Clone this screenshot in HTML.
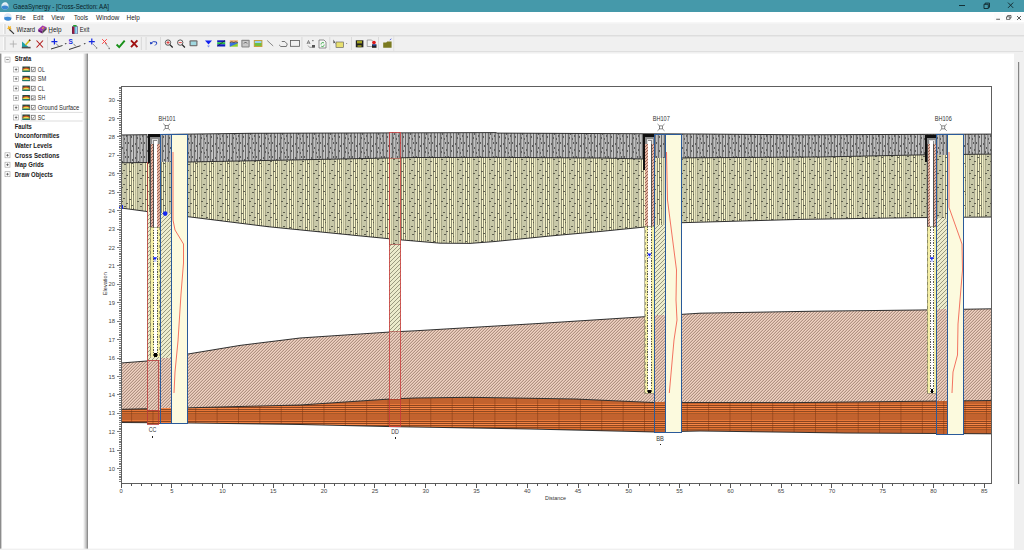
<!DOCTYPE html>
<html><head><meta charset="utf-8"><style>
*{margin:0;padding:0;box-sizing:border-box}
html,body{width:1024px;height:550px;overflow:hidden;background:#f0f0f0;font-family:"Liberation Sans", sans-serif;}
.abs{position:absolute}
#title{left:0;top:0;width:1024px;height:12px;background:#4799aa}
#menu{left:0;top:12px;width:1024px;height:10px;background:#fff}
#tb1{left:0;top:22px;width:1024px;height:13px;background:#f0f0f0}
#tb2{left:0;top:35px;width:1024px;height:16px;background:#f0f0f0}
#tbline{left:0;top:51px;width:1024px;height:1px;background:#a0a0a0}
#left{left:1px;top:52px;width:83px;height:496px;background:#fff;border-left:1px solid #a0a0a0}
#split{left:84px;top:52px;width:4px;height:498px;background:#f0f0f0}
#main{left:88px;top:52px;width:911px;height:496px;background:#fff}
.t{position:absolute;font-size:7px;color:#000;white-space:nowrap;line-height:8px}
</style></head><body>
<svg width="1024" height="550" style="position:absolute;left:0;top:0" shape-rendering="crispEdges">
<g shape-rendering="auto"><rect x="0" y="0" width="1024" height="12" fill="#4599aa"/>
<circle cx="5" cy="6" r="3.6" fill="#d8e8f4"/><path d="M1.6 6.5 Q5 4.5 8.4 6.8 L8 8.6 Q5 10.6 2 8.4Z" fill="#3a86d0"/><path d="M3 3.5 Q5 2.2 7 3.2" stroke="#fff" stroke-width="0.8" fill="none"/>
<text x="13" y="8.8" font-family='"Liberation Sans", sans-serif' font-size="7" textLength="96" lengthAdjust="spacingAndGlyphs" fill="#0a2026">GaeaSynergy - [Cross-Section: AA]</text>
<rect x="959" y="5" width="6" height="0.9" fill="#10262b"/>
<path d="M984 4.3h4.3v4.2h-4.3z M985.2 4.3V3.1h4.3v4.2h-1.2" stroke="#10262b" stroke-width="0.9" fill="none"/>
<path d="M1008 2.6L1013.2 7.9M1013.2 2.6L1008 7.9" stroke="#10262b" stroke-width="0.9"/>
<rect x="0" y="12" width="1024" height="10" fill="#ffffff"/>
<circle cx="7.8" cy="17" r="3.8" fill="#dbe8f5"/><path d="M4 17.5 Q8 15.8 11.6 17.8 L11 20 Q8 21.6 4.6 19.8Z" fill="#3b8ad6"/>
<text x="15.8" y="20" font-family='"Liberation Sans", sans-serif' font-size="7" textLength="9.8" lengthAdjust="spacingAndGlyphs" fill="#1a1a1a">File</text>
<text x="33" y="20" font-family='"Liberation Sans", sans-serif' font-size="7" textLength="10.5" lengthAdjust="spacingAndGlyphs" fill="#1a1a1a">Edit</text>
<text x="51.2" y="20" font-family='"Liberation Sans", sans-serif' font-size="7" textLength="13.2" lengthAdjust="spacingAndGlyphs" fill="#1a1a1a">View</text>
<text x="74" y="20" font-family='"Liberation Sans", sans-serif' font-size="7" textLength="14" lengthAdjust="spacingAndGlyphs" fill="#1a1a1a">Tools</text>
<text x="96" y="20" font-family='"Liberation Sans", sans-serif' font-size="7" textLength="23.3" lengthAdjust="spacingAndGlyphs" fill="#1a1a1a">Window</text>
<text x="126.6" y="20" font-family='"Liberation Sans", sans-serif' font-size="7" textLength="13.2" lengthAdjust="spacingAndGlyphs" fill="#1a1a1a">Help</text>
<rect x="994" y="13" width="9" height="8" fill="#fcfcfc"/><rect x="1004" y="13" width="9" height="8" fill="#fcfcfc"/><rect x="1014.5" y="13" width="9" height="8" fill="#fcfcfc"/>
<rect x="996.2" y="18.8" width="3.8" height="0.8" fill="#333"/>
<path d="M1006.5 16.8h3.4v2.6h-3.4z M1007.6 16.8v-1.3h3.4v2.6h-1.1" stroke="#333" stroke-width="0.7" fill="none"/>
<path d="M1017 16L1021 20M1021 16L1017 20" stroke="#333" stroke-width="0.8"/>
<rect x="0" y="22" width="1024" height="29" fill="#f0f0f0"/>
<rect x="0" y="35.2" width="1024" height="1.2" fill="#d9d9d9"/><rect x="0" y="22" width="1024" height="1.5" fill="#f7f7f7"/>
<rect x="0" y="51.8" width="1023" height="1.8" fill="#9c9c9c"/>
<rect x="3.2" y="24" width="0.8" height="10" fill="#fdfdfd"/><rect x="4.6" y="24" width="0.8" height="10" fill="#c8c8c8"/>
<rect x="3.2" y="37" width="0.8" height="13" fill="#fdfdfd"/><rect x="4.6" y="37" width="0.8" height="13" fill="#c8c8c8"/>
<path d="M8 25.5l1.5 1.2 1.6-.6-.4 1.7 1 1.4-1.7.1-.9 1.4-.6-1.6-1.6-.5 1.3-1z" fill="#f0b020"/><path d="M9.5 29.5l4.5 4.4" stroke="#333" stroke-width="1.1"/>
<text x="16.5" y="32.4" font-family='"Liberation Sans", sans-serif' font-size="7" textLength="18.5" lengthAdjust="spacingAndGlyphs" fill="#1a1a1a">Wizard</text>
<path d="M38.2 29.2L42.6 25.6 46.6 27.2 42.4 31z" fill="#a032b4"/><path d="M38.2 29.2L42.4 31 42.4 33.4 38.2 31.4z" fill="#6a1a7a"/><path d="M42.4 31L46.6 27.2 46.6 29.6 42.4 33.4z" fill="#4a4a4a"/><path d="M43.6 26.8l-1.2 1.6 1 .3" stroke="#f4d020" stroke-width="1" fill="none"/>
<text x="48.3" y="32.4" font-family='"Liberation Sans", sans-serif' font-size="7" textLength="13.2" lengthAdjust="spacingAndGlyphs" fill="#1a1a1a">Help</text><rect x="48.5" y="32.6" width="3.8" height="0.5" fill="#222"/>
<rect x="72" y="26.4" width="5.8" height="7.4" fill="#302060"/><rect x="72.4" y="26.8" width="2" height="6.8" fill="#a01838"/><rect x="74.6" y="26.8" width="2.8" height="6.8" fill="#c8f0ff"/><rect x="75.2" y="27" width="1.2" height="6.4" fill="#60b8e0"/><rect x="73.2" y="25" width="3.4" height="1.5" fill="#20a030"/>
<text x="79.8" y="32.4" font-family='"Liberation Sans", sans-serif' font-size="7" textLength="9.5" lengthAdjust="spacingAndGlyphs" fill="#1a1a1a">Exit</text>
<path d="M13.3 40.5v7M9.8 44h7" stroke="#a8a8a8" stroke-width="0.8"/>
<path d="M22 47.5l0-6 6.5 5.5z" fill="#20a0a8"/><rect x="21.8" y="46.8" width="8.8" height="1.6" fill="#505050"/><path d="M25.5 45l4.5-5" stroke="#d0c020" stroke-width="1.6"/><path d="M29.2 40.8l1-1" stroke="#502010" stroke-width="1.6"/>
<path d="M36.5 40.5l6.5 7M43 40.5l-6.5 7" stroke="#b01818" stroke-width="1.1"/>
<rect x="47.3" y="37" width="0.7" height="13" fill="#d0d0d0"/>
<path d="M54.4 38.6v6M51.4 41.6h6" stroke="#1428e0" stroke-width="1.2"/><path d="M51 49l11.5-3.5" stroke="#222" stroke-width="0.9"/><path d="M56 43.5l2.5 2.5" stroke="#333" stroke-width="0.6"/><path d="M64.6 43.2h2.2l-1.1 1.3z" fill="#222"/>
<text x="68.6" y="44.3" font-family='"Liberation Sans", sans-serif' font-size="6.5" font-weight="bold" fill="#1428e0">S</text><path d="M69 49.5l11.5-3.8" stroke="#222" stroke-width="0.9"/><path d="M73.5 43.8l2.3 2.5" stroke="#333" stroke-width="0.6"/><path d="M83.6 43.2h2.2l-1.1 1.3z" fill="#222"/>
<path d="M91.8 38.6v6M88.8 41.6h6" stroke="#1428e0" stroke-width="1.2"/><path d="M93 44l3.6 3.8" stroke="#333" stroke-width="0.7" stroke-dasharray="1 .6"/><circle cx="96.6" cy="48" r=".8" fill="#777"/>
<path d="M102.2 39.2l4.6 4.6M106.8 39.2l-4.6 4.6" stroke="#ff3030" stroke-width="0.9"/><path d="M105 43l3.8 4.4" stroke="#333" stroke-width="0.7" stroke-dasharray="1 .6"/><circle cx="109.2" cy="48.5" r=".8" fill="#777"/>
<path d="M116.6 44.5l2.6 2.6 5.5-6.5" stroke="#189018" stroke-width="1.9" fill="none"/>
<path d="M131 40.4l6.4 6.8M137.4 40.4l-6.4 6.8" stroke="#a01010" stroke-width="1.9"/>
<rect x="140.9" y="37" width="0.7" height="13" fill="#d0d0d0"/><rect x="145.7" y="37" width="0.7" height="13" fill="#d0d0d0"/>
<path d="M150.5 43.5 Q153 40.5 156.5 42 Q157.5 44 155 45.5" stroke="#2040c0" stroke-width="1" fill="none"/><path d="M149.8 41.8l0.6 2.8 2.4-1z" fill="#2040c0"/>
<rect x="160" y="37" width="0.7" height="13" fill="#d0d0d0"/>
<circle cx="168" cy="42.6" r="2.7" fill="#f4f4f4" stroke="#333" stroke-width="0.8"/><path d="M169.9 44.6l2.8 2.9" stroke="#202020" stroke-width="1.2"/>
<circle cx="180.2" cy="42.6" r="2.7" fill="#f4f4f4" stroke="#333" stroke-width="0.8"/><path d="M182.1 44.6l2.8 2.9" stroke="#202020" stroke-width="1.2"/>
<path d="M166.4 42.6h3.2M168 41v3.2" stroke="#e02020" stroke-width="0.8"/><path d="M178.6 42.6h3.2" stroke="#e02020" stroke-width="0.8"/>
<rect x="189.5" y="40.3" width="8" height="6" rx="1" fill="#707070"/><rect x="190.7" y="41.5" width="5.6" height="3.6" fill="#a0d8e0"/>
<path d="M205 40.5h7l-3.5 4z" fill="#1020f0"/><path d="M207 45.5h3l-1.5 2z" fill="#8090f0"/>
<rect x="217.2" y="40.3" width="8" height="2" fill="#101cc0"/><rect x="217.2" y="42.3" width="8" height="2" fill="#20c040"/><rect x="217.2" y="44.3" width="8" height="2.2" fill="#101cc0"/><path d="M217.5 46l7.5-5.5" stroke="#222" stroke-width="0.7"/>
<rect x="229.8" y="40.3" width="8" height="2.6" fill="#e8a870"/><path d="M229.8 42.9h8v3.8h-8z" fill="#90d030"/><path d="M229.8 42.5l8 0 0 .8 -8 3.4z" fill="#3a70e0"/><path d="M229.8 42.6l2-.8 2 .8 2-.8 2 .8" stroke="#222" stroke-width="0.6" fill="none"/>
<rect x="241.3" y="39.8" width="8.4" height="7.6" rx="0.8" fill="#8a8a8a"/><rect x="242.5" y="41" width="6" height="5.4" fill="#c8c8c8"/><path d="M244 43.5l1.5-1.5 1.5 1.5" stroke="#333" stroke-width="0.7" fill="none"/>
<rect x="253.8" y="40" width="8.6" height="7" fill="#c8a040"/><rect x="254.8" y="41" width="6.6" height="5" fill="#70c040"/><rect x="254.8" y="41" width="6.6" height="2" fill="#9ad0f0"/>
<path d="M267.2 40.5l6 5.5" stroke="#707070" stroke-width="0.8"/>
<path d="M279.2 45l1.6 1.5h5.5l1-2.5-2.5-2.5h-3" stroke="#555" stroke-width="0.8" fill="none"/>
<rect x="290.5" y="40.5" width="9" height="5.8" fill="none" stroke="#555" stroke-width="0.8"/>
<rect x="301.6" y="37" width="0.7" height="13" fill="#d0d0d0"/>
<path d="M307 44l1.5-3.5 1.5 3.5M307.5 43h2" stroke="#444" stroke-width="0.6" fill="none"/><path d="M308 45.5l1.5 1.8h5" stroke="#666" stroke-width="0.6" fill="none"/><rect x="312" y="45" width="3" height="2.5" fill="#555"/><rect x="312.4" y="40" width="1" height="1.2" fill="#444"/>
<path d="M319 40h5l2 2v6h-7z" fill="#f8f8f8" stroke="#666" stroke-width="0.7"/><path d="M321 44.5a1.8 1.8 0 0 1 3-1.5M324.2 44.6a1.8 1.8 0 0 1-3 1.5" stroke="#22a030" stroke-width="0.8" fill="none"/>
<rect x="329.5" y="37" width="0.7" height="13" fill="#d0d0d0"/>
<path d="M333.5 39.5l0 4 1-1 1.5 2z" fill="#222"/><rect x="336" y="42" width="7.5" height="5.5" fill="#e8e070" stroke="#555" stroke-width="0.6"/><path d="M346 43.2h1.4l-.7.9z" fill="#222"/>
<rect x="351" y="37" width="0.7" height="13" fill="#d0d0d0"/>
<rect x="355.8" y="40.3" width="7.6" height="7" fill="#222"/><rect x="357" y="40.8" width="5" height="2.6" fill="#a0a020"/><rect x="357.5" y="45" width="4" height="2.2" fill="#808020"/>
<path d="M367.2 40h4.4l1.5 1.5v5h-5.9z" fill="#f4f4f4" stroke="#777" stroke-width="0.6"/><circle cx="374" cy="42.5" r="1.8" fill="#e01818"/><rect x="372" y="44.4" width="4.5" height="3.4" fill="#222"/><rect x="372.5" y="44.5" width="3.4" height="1" fill="#2a50d0"/>
<rect x="378.3" y="37" width="0.7" height="13" fill="#d0d0d0"/>
<path d="M383.2 42.5h3l1 -1h4.4v6.3h-8.4z" fill="#7a7a20"/><path d="M389.8 40l1.6-1.2" stroke="#3a50e0" stroke-width="0.8"/>
<rect x="393.5" y="36" width="0.7" height="15" fill="#dadada"/><rect x="0" y="52" width="1024" height="498" fill="#f0f0f0"/>
<rect x="1" y="53.6" width="82" height="495" fill="#ffffff"/>
<rect x="0" y="53.6" width="1.4" height="495" fill="#8c8c8c"/>
<rect x="83" y="53.6" width="1" height="495" fill="#f6f6f6"/><rect x="84" y="53.6" width="1" height="495" fill="#e2e2e2"/><rect x="85" y="53.6" width="1" height="495" fill="#cdcdcd"/><rect x="86" y="53.6" width="1" height="495" fill="#b4b4b4"/><rect x="87" y="53.6" width="1" height="495" fill="#8e8e8e"/>
<rect x="88" y="53.6" width="926" height="495" fill="#ffffff"/>
<rect x="1018" y="62" width="1.2" height="422" fill="#858585"/>
<rect x="5" y="57.1" width="5" height="5" fill="#fff" stroke="#a0a0a0" stroke-width="0.6"/><path d="M6.2 59.6h2.6" stroke="#333" stroke-width="0.6"/>
<text x="14.8" y="61.4" font-family='"Liberation Sans", sans-serif' font-size="6.6" font-weight="bold" textLength="16.5" lengthAdjust="spacingAndGlyphs" fill="#1a1a1a">Strata</text>
<rect x="13.6" y="67.0" width="5" height="5" fill="#fff" stroke="#a0a0a0" stroke-width="0.6"/><path d="M14.799999999999999 69.5h2.6" stroke="#333" stroke-width="0.6"/><path d="M16.1 68.2v2.6" stroke="#333" stroke-width="0.6"/>
<rect x="22.4" y="66.5" width="7.5" height="5.3" fill="#2a4a40"/><path d="M22.4 68.9Q26.1 66.3 29.9 68.9V69.7H22.4Z" fill="#c85020"/><path d="M22.8 69.9Q26.1 67.5 29.5 69.9V70.7H22.8Z" fill="#e8e050"/><rect x="22.4" y="70.7" width="7.5" height="1.1" fill="#1a7a70"/>
<rect x="30.5" y="66.7" width="5.3" height="5.6" fill="#d0d0d0"/><rect x="31.3" y="67.5" width="3.8" height="3.8" fill="#fff" stroke="#555" stroke-width="0.5"/><path d="M31.8 69.5l1 1 1.6-2" stroke="#222" stroke-width="0.5" fill="none"/>
<text x="37.8" y="71.8" font-family='"Liberation Sans", sans-serif' font-size="6.6" textLength="7" lengthAdjust="spacingAndGlyphs" fill="#2a2a2a">OL</text>
<rect x="13.6" y="76.3" width="5" height="5" fill="#fff" stroke="#a0a0a0" stroke-width="0.6"/><path d="M14.799999999999999 78.8h2.6" stroke="#333" stroke-width="0.6"/><path d="M16.1 77.5v2.6" stroke="#333" stroke-width="0.6"/>
<rect x="22.4" y="75.8" width="7.5" height="5.3" fill="#2a4a40"/><path d="M22.4 78.2Q26.1 75.6 29.9 78.2V79.0H22.4Z" fill="#c85020"/><path d="M22.8 79.2Q26.1 76.8 29.5 79.2V80.0H22.8Z" fill="#e8e050"/><rect x="22.4" y="80.0" width="7.5" height="1.1" fill="#1a7a70"/>
<rect x="30.5" y="76.0" width="5.3" height="5.6" fill="#d0d0d0"/><rect x="31.3" y="76.8" width="3.8" height="3.8" fill="#fff" stroke="#555" stroke-width="0.5"/><path d="M31.8 78.8l1 1 1.6-2" stroke="#222" stroke-width="0.5" fill="none"/>
<text x="37.8" y="81.1" font-family='"Liberation Sans", sans-serif' font-size="6.6" textLength="8.5" lengthAdjust="spacingAndGlyphs" fill="#2a2a2a">SM</text>
<rect x="13.6" y="86.0" width="5" height="5" fill="#fff" stroke="#a0a0a0" stroke-width="0.6"/><path d="M14.799999999999999 88.5h2.6" stroke="#333" stroke-width="0.6"/><path d="M16.1 87.2v2.6" stroke="#333" stroke-width="0.6"/>
<rect x="22.4" y="85.5" width="7.5" height="5.3" fill="#2a4a40"/><path d="M22.4 87.9Q26.1 85.3 29.9 87.9V88.7H22.4Z" fill="#c85020"/><path d="M22.8 88.9Q26.1 86.5 29.5 88.9V89.7H22.8Z" fill="#e8e050"/><rect x="22.4" y="89.7" width="7.5" height="1.1" fill="#1a7a70"/>
<rect x="30.5" y="85.7" width="5.3" height="5.6" fill="#d0d0d0"/><rect x="31.3" y="86.5" width="3.8" height="3.8" fill="#fff" stroke="#555" stroke-width="0.5"/><path d="M31.8 88.5l1 1 1.6-2" stroke="#222" stroke-width="0.5" fill="none"/>
<text x="37.8" y="90.8" font-family='"Liberation Sans", sans-serif' font-size="6.6" textLength="7" lengthAdjust="spacingAndGlyphs" fill="#2a2a2a">CL</text>
<rect x="13.6" y="95.5" width="5" height="5" fill="#fff" stroke="#a0a0a0" stroke-width="0.6"/><path d="M14.799999999999999 98h2.6" stroke="#333" stroke-width="0.6"/><path d="M16.1 96.7v2.6" stroke="#333" stroke-width="0.6"/>
<rect x="22.4" y="95" width="7.5" height="5.3" fill="#2a4a40"/><path d="M22.4 97.4Q26.1 94.8 29.9 97.4V98.2H22.4Z" fill="#c85020"/><path d="M22.8 98.4Q26.1 96 29.5 98.4V99.2H22.8Z" fill="#e8e050"/><rect x="22.4" y="99.2" width="7.5" height="1.1" fill="#1a7a70"/>
<rect x="30.5" y="95.2" width="5.3" height="5.6" fill="#d0d0d0"/><rect x="31.3" y="96" width="3.8" height="3.8" fill="#fff" stroke="#555" stroke-width="0.5"/><path d="M31.8 98l1 1 1.6-2" stroke="#222" stroke-width="0.5" fill="none"/>
<text x="37.8" y="100.3" font-family='"Liberation Sans", sans-serif' font-size="6.6" textLength="7.5" lengthAdjust="spacingAndGlyphs" fill="#2a2a2a">SH</text>
<rect x="13.6" y="105.1" width="5" height="5" fill="#fff" stroke="#a0a0a0" stroke-width="0.6"/><path d="M14.799999999999999 107.6h2.6" stroke="#333" stroke-width="0.6"/><path d="M16.1 106.3v2.6" stroke="#333" stroke-width="0.6"/>
<rect x="22.4" y="104.6" width="7.5" height="5.3" fill="#2a4a40"/><path d="M22.4 107.0Q26.1 104.39999999999999 29.9 107.0V107.8H22.4Z" fill="#c85020"/><path d="M22.8 108.0Q26.1 105.6 29.5 108.0V108.8H22.8Z" fill="#e8e050"/><rect x="22.4" y="108.8" width="7.5" height="1.1" fill="#1a7a70"/>
<rect x="30.5" y="104.8" width="5.3" height="5.6" fill="#d0d0d0"/><rect x="31.3" y="105.6" width="3.8" height="3.8" fill="#fff" stroke="#555" stroke-width="0.5"/><path d="M31.8 107.6l1 1 1.6-2" stroke="#222" stroke-width="0.5" fill="none"/>
<text x="37.8" y="109.89999999999999" font-family='"Liberation Sans", sans-serif' font-size="6.6" textLength="41.5" lengthAdjust="spacingAndGlyphs" fill="#2a2a2a">Ground Surface</text>
<rect x="13.6" y="115.0" width="5" height="5" fill="#fff" stroke="#a0a0a0" stroke-width="0.6"/><path d="M14.799999999999999 117.5h2.6" stroke="#333" stroke-width="0.6"/><path d="M16.1 116.2v2.6" stroke="#333" stroke-width="0.6"/>
<rect x="22.4" y="114.5" width="7.5" height="5.3" fill="#2a4a40"/><path d="M22.4 116.9Q26.1 114.3 29.9 116.9V117.7H22.4Z" fill="#c85020"/><path d="M22.8 117.9Q26.1 115.5 29.5 117.9V118.7H22.8Z" fill="#e8e050"/><rect x="22.4" y="118.7" width="7.5" height="1.1" fill="#1a7a70"/>
<rect x="30.5" y="114.7" width="5.3" height="5.6" fill="#d0d0d0"/><rect x="31.3" y="115.5" width="3.8" height="3.8" fill="#fff" stroke="#555" stroke-width="0.5"/><path d="M31.8 117.5l1 1 1.6-2" stroke="#222" stroke-width="0.5" fill="none"/>
<text x="37.8" y="119.8" font-family='"Liberation Sans", sans-serif' font-size="6.6" textLength="7.3" lengthAdjust="spacingAndGlyphs" fill="#2a2a2a">SC</text>
<path d="M21.3 112.4H82.7M21.3 121H82.7M21.3 112.4V121" stroke="#c8c8c8" stroke-width="0.6"/>
<text x="14.8" y="128.9" font-family='"Liberation Sans", sans-serif' font-size="6.6" font-weight="bold" textLength="17" lengthAdjust="spacingAndGlyphs" fill="#1a1a1a">Faults</text>
<text x="14.8" y="137.9" font-family='"Liberation Sans", sans-serif' font-size="6.6" font-weight="bold" textLength="44.7" lengthAdjust="spacingAndGlyphs" fill="#1a1a1a">Unconformities</text>
<text x="14.8" y="147.8" font-family='"Liberation Sans", sans-serif' font-size="6.6" font-weight="bold" textLength="37.4" lengthAdjust="spacingAndGlyphs" fill="#1a1a1a">Water Levels</text>
<rect x="5" y="152.8" width="5" height="5" fill="#fff" stroke="#a0a0a0" stroke-width="0.6"/><path d="M6.2 155.3h2.6" stroke="#333" stroke-width="0.6"/><path d="M7.5 154.0v2.6" stroke="#333" stroke-width="0.6"/>
<text x="14.8" y="157.60000000000002" font-family='"Liberation Sans", sans-serif' font-size="6.6" font-weight="bold" textLength="44.7" lengthAdjust="spacingAndGlyphs" fill="#1a1a1a">Cross Sections</text>
<rect x="5" y="162.2" width="5" height="5" fill="#fff" stroke="#a0a0a0" stroke-width="0.6"/><path d="M6.2 164.7h2.6" stroke="#333" stroke-width="0.6"/><path d="M7.5 163.39999999999998v2.6" stroke="#333" stroke-width="0.6"/>
<text x="14.8" y="167.0" font-family='"Liberation Sans", sans-serif' font-size="6.6" font-weight="bold" textLength="29.1" lengthAdjust="spacingAndGlyphs" fill="#1a1a1a">Map Grids</text>
<rect x="5" y="171.7" width="5" height="5" fill="#fff" stroke="#a0a0a0" stroke-width="0.6"/><path d="M6.2 174.2h2.6" stroke="#333" stroke-width="0.6"/><path d="M7.5 172.89999999999998v2.6" stroke="#333" stroke-width="0.6"/>
<text x="14.8" y="176.5" font-family='"Liberation Sans", sans-serif' font-size="6.6" font-weight="bold" textLength="38.1" lengthAdjust="spacingAndGlyphs" fill="#1a1a1a">Draw Objects</text></g>
<defs><pattern id="pGray" width="16" height="14" patternUnits="userSpaceOnUse"><rect x="0" width="1" height="14" fill="#c0c0c0"/><rect x="1" width="1" height="14" fill="#b0b0b0"/><rect x="2" width="1" height="14" fill="#707070"/><rect x="3" width="1" height="14" fill="#b4b4b4"/><rect x="4" width="1" height="14" fill="#c8c8c8"/><rect x="5" width="1" height="14" fill="#6a6a6a"/><rect x="6" width="1" height="14" fill="#c4c4c4"/><rect x="7" width="1" height="14" fill="#b0b0b0"/><rect x="8" width="1" height="14" fill="#707070"/><rect x="9" width="1" height="14" fill="#a0a0a0"/><rect x="10" width="1" height="14" fill="#c4c4c4"/><rect x="11" width="1" height="14" fill="#909090"/><rect x="12" width="1" height="14" fill="#a0a0a0"/><rect x="13" width="1" height="14" fill="#c0c0c0"/><rect x="14" width="1" height="14" fill="#a0a0a0"/><rect x="15" width="1" height="14" fill="#777777"/><rect x="0" y="2" width="1" height="2" fill="#5c5c5c"/><rect x="7" y="3" width="1" height="2" fill="#5c5c5c"/><rect x="10" y="7" width="1" height="2" fill="#5c5c5c"/><rect x="13" y="2" width="1" height="2" fill="#5c5c5c"/><rect x="3" y="10" width="1" height="2" fill="#5c5c5c"/><rect x="9" y="11" width="1" height="2" fill="#5c5c5c"/><rect x="14" y="9" width="1" height="2" fill="#5c5c5c"/><rect x="4" y="5" width="1" height="2" fill="#5c5c5c"/><rect x="12" y="12" width="1" height="2" fill="#5c5c5c"/></pattern>
<pattern id="pTan" width="16" height="14" patternUnits="userSpaceOnUse"><rect x="0" width="1" height="14" fill="#e6e4be"/><rect x="1" width="1" height="14" fill="#8c8c72"/><rect x="2" width="1" height="14" fill="#fcf8cc"/><rect x="3" width="1" height="14" fill="#8c8c72"/><rect x="4" width="1" height="14" fill="#fcf8cc"/><rect x="5" width="1" height="14" fill="#8c8c72"/><rect x="6" width="1" height="14" fill="#f0eec4"/><rect x="7" width="1" height="14" fill="#b8b898"/><rect x="8" width="1" height="14" fill="#e0dcb8"/><rect x="9" width="1" height="14" fill="#a8a888"/><rect x="10" width="1" height="14" fill="#c8c8a8"/><rect x="11" width="1" height="14" fill="#c8c8a8"/><rect x="12" width="1" height="14" fill="#c8c8a8"/><rect x="13" width="1" height="14" fill="#c8c8a8"/><rect x="14" width="1" height="14" fill="#a8a890"/><rect x="15" width="1" height="14" fill="#e0dcb8"/><rect x="1" y="3" width="2" height="1" fill="#5e5e4e"/><rect x="3" y="9" width="2" height="1" fill="#5e5e4e"/><rect x="9" y="5" width="2" height="1" fill="#5e5e4e"/><rect x="11" y="2" width="2" height="1" fill="#5e5e4e"/><rect x="12" y="10" width="2" height="1" fill="#5e5e4e"/><rect x="5" y="12" width="1" height="1" fill="#5e5e4e"/><rect x="14" y="7" width="2" height="1" fill="#5e5e4e"/></pattern>
<pattern id="pSal" width="3" height="3" patternUnits="userSpaceOnUse"><rect x="0" y="0" width="1" height="1" fill="#b09282"/><rect x="1" y="0" width="1" height="1" fill="#f0d2c2"/><rect x="2" y="0" width="1" height="1" fill="#dabcac"/><rect x="0" y="1" width="1" height="1" fill="#f0d2c2"/><rect x="1" y="1" width="1" height="1" fill="#dabcac"/><rect x="2" y="1" width="1" height="1" fill="#b09282"/><rect x="0" y="2" width="1" height="1" fill="#dabcac"/><rect x="1" y="2" width="1" height="1" fill="#b09282"/><rect x="2" y="2" width="1" height="1" fill="#f0d2c2"/></pattern>
<pattern id="pOra" y="4" width="21.37" height="16" patternUnits="userSpaceOnUse"><rect y="0" width="21.37" height="1" fill="#e87838"/><rect y="1" width="21.37" height="1" fill="#8a4420"/><rect y="2" width="21.37" height="1" fill="#f08040"/><rect y="3" width="21.37" height="1" fill="#8a4420"/><rect y="4" width="21.37" height="1" fill="#f88848"/><rect y="5" width="21.37" height="1" fill="#904820"/><rect y="6" width="21.37" height="1" fill="#e87838"/><rect y="7" width="21.37" height="1" fill="#904820"/><rect y="8" width="21.37" height="1" fill="#e07030"/><rect y="9" width="21.37" height="1" fill="#a85828"/><rect y="10" width="21.37" height="1" fill="#c2622e"/><rect y="11" width="21.37" height="1" fill="#c2622e"/><rect y="12" width="21.37" height="1" fill="#c2622e"/><rect y="13" width="21.37" height="1" fill="#c2622e"/><rect y="14" width="21.37" height="1" fill="#c2622e"/><rect y="15" width="21.37" height="1" fill="#c2622e"/><rect x="2.6" y="0" width="1" height="16" fill="#7a3410" opacity="0.5"/></pattern>
<pattern id="pGrn" width="4" height="4" patternUnits="userSpaceOnUse">
 <rect width="4" height="4" fill="#ececcc"/>
 <rect x="0" y="3" width="1" height="1" fill="#9a9a80"/>
 <rect x="1" y="2" width="1" height="1" fill="#9a9a80"/>
 <rect x="2" y="1" width="1" height="1" fill="#9a9a80"/>
 <rect x="3" y="0" width="1" height="1" fill="#9a9a80"/>
</pattern>
<pattern id="pBrn" width="3" height="3" patternUnits="userSpaceOnUse">
 <rect width="3" height="3" fill="#e4b4a2"/>
 <rect x="0" y="2" width="1" height="1" fill="#9c6656"/>
 <rect x="1" y="1" width="1" height="1" fill="#9c6656"/>
 <rect x="2" y="0" width="1" height="1" fill="#9c6656"/>
</pattern></defs>
<polygon points="121.0,135.0 250.0,133.3 496.0,132.6 497.0,133.1 700.0,134.0 800.0,134.8 991.0,134.1 991.0,154.1 925.0,154.8 820.0,157.0 690.0,157.8 645.0,159.0 600.0,158.0 500.0,157.4 415.0,157.5 260.0,160.6 188.0,162.0 121.0,162.8" fill="url(#pGray)"/>
<polygon points="121.0,162.8 188.0,162.0 260.0,160.6 415.0,157.5 500.0,157.4 600.0,158.0 645.0,159.0 690.0,157.8 820.0,157.0 925.0,154.8 991.0,154.1 991.0,217.0 920.0,217.6 800.0,219.4 682.0,222.7 645.0,227.0 600.0,231.5 550.0,236.0 494.0,241.6 470.0,243.4 440.0,243.2 400.0,239.8 359.0,235.8 268.0,226.7 188.0,216.7 147.0,211.5 121.0,208.0" fill="url(#pTan)"/>
<polygon points="121.0,363.0 147.0,361.0 188.0,354.0 240.0,345.4 300.0,338.0 390.0,332.0 415.0,330.8 540.0,323.4 645.0,316.7 700.0,313.2 815.0,311.2 920.0,310.0 991.0,308.8 991.0,400.5 795.0,402.6 700.0,402.5 655.0,402.6 575.0,399.0 470.0,397.3 415.0,398.0 390.0,399.0 300.0,405.0 188.0,407.8 121.0,409.3" fill="url(#pSal)"/>
<polygon points="121.0,409.3 188.0,407.8 300.0,405.0 390.0,399.0 415.0,398.0 470.0,397.3 575.0,399.0 655.0,402.6 700.0,402.5 795.0,402.6 991.0,400.5 991.0,433.8 845.0,433.0 700.0,431.0 655.0,432.0 530.0,429.0 390.0,426.6 300.0,424.5 190.0,423.0 121.0,422.5" fill="url(#pOra)"/>
<polyline points="121.0,135.0 250.0,133.3 496.0,132.6 497.0,133.1 700.0,134.0 800.0,134.8 991.0,134.1" fill="none" stroke="#303030" stroke-width="1" shape-rendering="auto"/>
<polyline points="121.0,162.8 188.0,162.0 260.0,160.6 415.0,157.5 500.0,157.4 600.0,158.0 645.0,159.0 690.0,157.8 820.0,157.0 925.0,154.8 991.0,154.1" fill="none" stroke="#303030" stroke-width="1" shape-rendering="auto"/>
<polyline points="121.0,208.0 147.0,211.5 188.0,216.7 268.0,226.7 359.0,235.8 400.0,239.8 440.0,243.2 470.0,243.4 494.0,241.6 550.0,236.0 600.0,231.5 645.0,227.0 682.0,222.7 800.0,219.4 920.0,217.6 991.0,217.0" fill="none" stroke="#303030" stroke-width="1" shape-rendering="auto"/>
<polyline points="121.0,363.0 147.0,361.0 188.0,354.0 240.0,345.4 300.0,338.0 390.0,332.0 415.0,330.8 540.0,323.4 645.0,316.7 700.0,313.2 815.0,311.2 920.0,310.0 991.0,308.8" fill="none" stroke="#303030" stroke-width="1" shape-rendering="auto"/>
<polyline points="121.0,409.3 188.0,407.8 300.0,405.0 390.0,399.0 415.0,398.0 470.0,397.3 575.0,399.0 655.0,402.6 700.0,402.5 795.0,402.6 991.0,400.5" fill="none" stroke="#303030" stroke-width="1" shape-rendering="auto"/>
<polyline points="121.0,422.5 190.0,423.0 300.0,424.5 390.0,426.6 530.0,429.0 655.0,432.0 700.0,431.0 845.0,433.0 991.0,433.8" fill="none" stroke="#303030" stroke-width="1" shape-rendering="auto"/>
<rect x="389.2" y="132.3" width="11.30" height="26.00" fill="url(#pGray)"/><rect x="389.2" y="158.3" width="11.30" height="85.70" fill="url(#pTan)"/><rect x="389.2" y="244" width="11.30" height="87.70" fill="url(#pGrn)"/><rect x="389.2" y="331.7" width="11.30" height="67.30" fill="url(#pSal)"/><rect x="389.2" y="399" width="11.30" height="27.60" fill="url(#pOra)"/>
<rect x="389.2" y="132.3" width="11.3" height="294.3" fill="none" stroke="#c83838" stroke-width="0.8"/>
<path d="M389.2 158.3h11.3M389.2 244h11.3M389.2 331.7h11.3M389.2 399h11.3" stroke="#a03030" stroke-width="0.6"/>
<text x="395" y="434.2" text-anchor="middle" font-family='"Liberation Sans", sans-serif' font-size="6.3" textLength="7.7" lengthAdjust="spacingAndGlyphs" fill="#333">DD</text>
<rect x="394.6" y="437" width="1" height="1.6" fill="#222"/>
<rect x="147.2" y="134" width="13.30" height="28.50" fill="url(#pGray)"/><rect x="147.2" y="162.5" width="13.30" height="49.50" fill="url(#pTan)"/><rect x="147.2" y="212" width="13.30" height="148.00" fill="url(#pGrn)"/><rect x="147.2" y="360" width="13.30" height="50.00" fill="url(#pSal)"/><rect x="147.2" y="410" width="13.30" height="14.00" fill="url(#pOra)"/>
<path d="M147.4 162V424H158.6V360M147.4 360H158.6M147.4 410H158.6" fill="none" stroke="#b83a3a" stroke-width="0.8"/>
<rect x="148" y="134.3" width="12.30" height="3" fill="#101010"/><rect x="148" y="134.3" width="2.2" height="28.20" fill="#101010"/><rect x="150.2" y="137.3" width="10.10" height="6.2" fill="#8a8a8a"/><rect x="150.2" y="143.5" width="10.10" height="83.50" fill="url(#pBrn)"/><path d="M152.65 143.5V139.9H157.85V143.5" fill="none" stroke="#dcdcdc" stroke-width="1"/><rect x="150.20" y="143.5" width="0.6" height="83.50" fill="#505050"/><rect x="153.75" y="140.8" width="3" height="86.20" fill="#ffffff"/><rect x="153.25" y="143.5" width="0.5" height="83.50" fill="#505050"/><rect x="156.75" y="143.5" width="0.5" height="83.50" fill="#505050"/><rect x="150.2" y="227" width="10.10" height="130.00" fill="#f6f0a8"/><rect x="153.65" y="227" width="3.2" height="130.00" fill="#ffffff"/><path d="M153.45 227V357M157.05 227V357" stroke="#333" stroke-width="0.8" stroke-dasharray="1.4 1.2"/><path d="M150.60 227V357M159.90 227V357" stroke="#777760" stroke-width="0.6" stroke-dasharray="0.6 0.6"/><rect x="150.2" y="227" width="10.10" height="130.00" fill="none" stroke="#707050" stroke-width="0.5"/><rect x="153.85" y="353.20" width="2.8" height="3.8" fill="#000"/>
<rect x="150.3" y="357" width="10" height="3" fill="url(#pGrn)"/>
<rect x="160.5" y="134" width="11.00" height="28.00" fill="url(#pGray)"/><rect x="160.5" y="162" width="11.00" height="51.00" fill="url(#pTan)"/><rect x="160.5" y="213" width="11.00" height="145.00" fill="url(#pGrn)"/><rect x="160.5" y="358" width="11.00" height="50.40" fill="url(#pSal)"/><rect x="160.5" y="408.4" width="11.00" height="14.60" fill="url(#pOra)"/>
<rect x="171.5" y="134" width="16.00" height="289.00" fill="#fcfade"/><polyline points="173,152 173,220 175,230 183.5,244 183.5,263 181,294 178,341 175,372 174,393" fill="none" stroke="#f05040" stroke-width="0.8" shape-rendering="auto"/>
<rect x="160.7" y="134.3" width="26.6" height="288.7" fill="none" stroke="#2a5a9a" stroke-width="1"/><path d="M171.5 134.3V423" stroke="#2a5a9a" stroke-width="1"/>
<circle cx="165.2" cy="213.6" r="2.3" fill="#1428f0" shape-rendering="auto"/>
<rect x="119.4" y="205.8" width="3" height="3" fill="#c8d0ff" stroke="#1428f0" stroke-width="1.1"/>
<g shape-rendering="auto"><path d="M152.8 257.2h4.4l-2.2 3z" fill="#1020ff"/><path d="M153.6 261h2.8" stroke="#8090ff" stroke-width="0.9"/></g>
<text x="167" y="120.7" text-anchor="middle" font-family='"Liberation Sans", sans-serif' font-size="6.3" textLength="17" lengthAdjust="spacingAndGlyphs" fill="#333">BH101</text>
<g shape-rendering="auto" stroke="#5a5a5a" stroke-width="0.7" fill="none"><rect x="165.2" y="125.5" width="3" height="3"/><path d="M163.2 123.6L165.2 125.5M170.2 123.6L168.2 125.5M163.2 130.4L165.2 128.5M170.2 130.4L168.2 128.5"/></g>
<text x="152.5" y="432.4" text-anchor="middle" font-family='"Liberation Sans", sans-serif' font-size="6.3" textLength="7.7" lengthAdjust="spacingAndGlyphs" fill="#333">CC</text>
<rect x="151.8" y="436" width="1" height="1.6" fill="#222"/>
<rect x="642.5" y="134.3" width="12.20" height="3" fill="#101010"/><rect x="642.5" y="134.3" width="2.2" height="35.70" fill="#101010"/><rect x="644.7" y="137.3" width="10.00" height="6.2" fill="#8a8a8a"/><rect x="644.7" y="143.5" width="10.00" height="82.90" fill="url(#pBrn)"/><path d="M647.10 143.5V139.9H652.30V143.5" fill="none" stroke="#dcdcdc" stroke-width="1"/><rect x="644.70" y="143.5" width="0.6" height="82.90" fill="#505050"/><rect x="648.20" y="140.8" width="3" height="85.60" fill="#ffffff"/><rect x="647.70" y="143.5" width="0.5" height="82.90" fill="#505050"/><rect x="651.20" y="143.5" width="0.5" height="82.90" fill="#505050"/><rect x="644.7" y="226.4" width="10.00" height="167.00" fill="#f6f0a8"/><rect x="648.10" y="226.4" width="3.2" height="167.00" fill="#ffffff"/><path d="M647.90 226.4V393.4M651.50 226.4V393.4" stroke="#333" stroke-width="0.8" stroke-dasharray="1.4 1.2"/><path d="M645.10 226.4V393.4M654.30 226.4V393.4" stroke="#777760" stroke-width="0.6" stroke-dasharray="0.6 0.6"/><rect x="644.7" y="226.4" width="10.00" height="167.00" fill="none" stroke="#707050" stroke-width="0.5"/><rect x="648.30" y="389.60" width="2.8" height="3.8" fill="#000"/>
<rect x="654.5" y="134" width="10.90" height="24.40" fill="url(#pGray)"/><rect x="654.5" y="158.4" width="10.90" height="66.60" fill="url(#pTan)"/><rect x="654.5" y="225" width="10.90" height="90.00" fill="url(#pGrn)"/><rect x="654.5" y="315" width="10.90" height="87.00" fill="url(#pSal)"/><rect x="654.5" y="402" width="10.90" height="30.00" fill="url(#pOra)"/>
<rect x="665.4" y="134" width="15.90" height="298.00" fill="#fcfade"/><polyline points="666.5,152 667.5,200 676.5,270 676,300 677,320 674,340 669.3,393" fill="none" stroke="#f05040" stroke-width="0.8" shape-rendering="auto"/>
<rect x="654.7" y="134.2" width="26.6" height="297.8" fill="none" stroke="#2a5a9a" stroke-width="1"/><path d="M665.4 134.2V432" stroke="#2a5a9a" stroke-width="1"/>
<g shape-rendering="auto"><path d="M647.1999999999999 253.5h4.4l-2.2 3z" fill="#1020ff"/><path d="M648.0 257.3h2.8" stroke="#8090ff" stroke-width="0.9"/></g>
<text x="661.3" y="120.7" text-anchor="middle" font-family='"Liberation Sans", sans-serif' font-size="6.3" textLength="17" lengthAdjust="spacingAndGlyphs" fill="#333">BH107</text>
<g shape-rendering="auto" stroke="#5a5a5a" stroke-width="0.7" fill="none"><rect x="659.5" y="125.9" width="3" height="3"/><path d="M657.5 124.0L659.5 125.9M664.5 124.0L662.5 125.9M657.5 130.8L659.5 128.9M664.5 130.8L662.5 128.9"/></g>
<text x="660" y="440.6" text-anchor="middle" font-family='"Liberation Sans", sans-serif' font-size="6.3" textLength="7.7" lengthAdjust="spacingAndGlyphs" fill="#333">BB</text>
<rect x="659.5" y="443.8" width="1" height="1.6" fill="#222"/>
<rect x="924.9" y="134.5" width="11.90" height="3" fill="#101010"/><rect x="924.9" y="134.5" width="2.2" height="27.50" fill="#101010"/><rect x="927.1" y="137.5" width="9.70" height="6.2" fill="#8a8a8a"/><rect x="927.1" y="143.7" width="9.70" height="83.00" fill="url(#pBrn)"/><path d="M929.35 143.7V140.1H934.55V143.7" fill="none" stroke="#dcdcdc" stroke-width="1"/><rect x="927.10" y="143.7" width="0.6" height="83.00" fill="#505050"/><rect x="930.45" y="141.0" width="3" height="85.70" fill="#ffffff"/><rect x="929.95" y="143.7" width="0.5" height="83.00" fill="#505050"/><rect x="933.45" y="143.7" width="0.5" height="83.00" fill="#505050"/><rect x="927.1" y="226.7" width="9.70" height="166.30" fill="#f6f0a8"/><rect x="930.35" y="226.7" width="3.2" height="166.30" fill="#ffffff"/><path d="M930.15 226.7V393M933.75 226.7V393" stroke="#333" stroke-width="0.8" stroke-dasharray="1.4 1.2"/><path d="M927.50 226.7V393M936.40 226.7V393" stroke="#777760" stroke-width="0.6" stroke-dasharray="0.6 0.6"/><rect x="927.1" y="226.7" width="9.70" height="166.30" fill="none" stroke="#707050" stroke-width="0.5"/><rect x="930.55" y="389.20" width="2.8" height="3.8" fill="#000"/>
<rect x="936.7" y="134.2" width="10.90" height="20.80" fill="url(#pGray)"/><rect x="936.7" y="155" width="10.90" height="62.50" fill="url(#pTan)"/><rect x="936.7" y="217.5" width="10.90" height="91.50" fill="url(#pGrn)"/><rect x="936.7" y="309" width="10.90" height="91.50" fill="url(#pSal)"/><rect x="936.7" y="400.5" width="10.90" height="33.50" fill="url(#pOra)"/>
<rect x="947.6" y="134.2" width="15.80" height="299.80" fill="#fcfade"/><polyline points="949,152 949,207.4 962,244 962.5,270 958,324 957.5,355 953,372 952,393" fill="none" stroke="#f05040" stroke-width="0.8" shape-rendering="auto"/>
<rect x="936.9" y="134.4" width="26.5" height="299.6" fill="none" stroke="#2a5a9a" stroke-width="1"/><path d="M947.6 134.4V434" stroke="#2a5a9a" stroke-width="1"/>
<g shape-rendering="auto"><path d="M929.5999999999999 257.2h4.4l-2.2 3z" fill="#1020ff"/><path d="M930.4 261h2.8" stroke="#8090ff" stroke-width="0.9"/></g>
<text x="943.3" y="120.7" text-anchor="middle" font-family='"Liberation Sans", sans-serif' font-size="6.3" textLength="17" lengthAdjust="spacingAndGlyphs" fill="#333">BH106</text>
<g shape-rendering="auto" stroke="#5a5a5a" stroke-width="0.7" fill="none"><rect x="941.8" y="125.9" width="3" height="3"/><path d="M939.8 124.0L941.8 125.9M946.8 124.0L944.8 125.9M939.8 130.8L941.8 128.9M946.8 130.8L944.8 128.9"/></g>
<rect x="121" y="86" width="870" height="397" fill="none" stroke="#5e5e5e" stroke-width="1"/>
<path d="M119 481.5H121M119 479.7H121M119 477.8H121M119 476.0H121M119 474.1H121M119 472.3H121M119 470.4H121M117 468.6H121M119 466.8H121M119 464.9H121M119 463.1H121M119 461.2H121M119 459.4H121M119 457.5H121M119 455.7H121M119 453.9H121M119 452.0H121M117 450.2H121M119 448.3H121M119 446.5H121M119 444.6H121M119 442.8H121M119 441.0H121M119 439.1H121M119 437.3H121M119 435.4H121M119 433.6H121M117 431.7H121M119 429.9H121M119 428.1H121M119 426.2H121M119 424.4H121M119 422.5H121M119 420.7H121M119 418.8H121M119 417.0H121M119 415.2H121M117 413.3H121M119 411.5H121M119 409.6H121M119 407.8H121M119 405.9H121M119 404.1H121M119 402.3H121M119 400.4H121M119 398.6H121M119 396.7H121M117 394.9H121M119 393.0H121M119 391.2H121M119 389.4H121M119 387.5H121M119 385.7H121M119 383.8H121M119 382.0H121M119 380.1H121M119 378.3H121M117 376.4H121M119 374.6H121M119 372.8H121M119 370.9H121M119 369.1H121M119 367.2H121M119 365.4H121M119 363.5H121M119 361.7H121M119 359.9H121M117 358.0H121M119 356.2H121M119 354.3H121M119 352.5H121M119 350.6H121M119 348.8H121M119 347.0H121M119 345.1H121M119 343.3H121M119 341.4H121M117 339.6H121M119 337.7H121M119 335.9H121M119 334.1H121M119 332.2H121M119 330.4H121M119 328.5H121M119 326.7H121M119 324.8H121M119 323.0H121M117 321.2H121M119 319.3H121M119 317.5H121M119 315.6H121M119 313.8H121M119 311.9H121M119 310.1H121M119 308.3H121M119 306.4H121M119 304.6H121M117 302.7H121M119 300.9H121M119 299.0H121M119 297.2H121M119 295.4H121M119 293.5H121M119 291.7H121M119 289.8H121M119 288.0H121M119 286.1H121M117 284.3H121M119 282.5H121M119 280.6H121M119 278.8H121M119 276.9H121M119 275.1H121M119 273.2H121M119 271.4H121M119 269.6H121M119 267.7H121M117 265.9H121M119 264.0H121M119 262.2H121M119 260.3H121M119 258.5H121M119 256.7H121M119 254.8H121M119 253.0H121M119 251.1H121M119 249.3H121M117 247.4H121M119 245.6H121M119 243.8H121M119 241.9H121M119 240.1H121M119 238.2H121M119 236.4H121M119 234.5H121M119 232.7H121M119 230.9H121M117 229.0H121M119 227.2H121M119 225.3H121M119 223.5H121M119 221.6H121M119 219.8H121M119 218.0H121M119 216.1H121M119 214.3H121M119 212.4H121M117 210.6H121M119 208.7H121M119 206.9H121M119 205.1H121M119 203.2H121M119 201.4H121M119 199.5H121M119 197.7H121M119 195.8H121M119 194.0H121M117 192.2H121M119 190.3H121M119 188.5H121M119 186.6H121M119 184.8H121M119 182.9H121M119 181.1H121M119 179.2H121M119 177.4H121M119 175.6H121M117 173.7H121M119 171.9H121M119 170.0H121M119 168.2H121M119 166.3H121M119 164.5H121M119 162.7H121M119 160.8H121M119 159.0H121M119 157.1H121M117 155.3H121M119 153.4H121M119 151.6H121M119 149.8H121M119 147.9H121M119 146.1H121M119 144.2H121M119 142.4H121M119 140.5H121M119 138.7H121M117 136.9H121M119 135.0H121M119 133.2H121M119 131.3H121M119 129.5H121M119 127.6H121M119 125.8H121M119 124.0H121M119 122.1H121M119 120.3H121M117 118.4H121M119 116.6H121M119 114.7H121M119 112.9H121M119 111.1H121M119 109.2H121M119 107.4H121M119 105.5H121M119 103.7H121M119 101.8H121M117 100.0H121M119 98.2H121M119 96.3H121M119 94.5H121M119 92.6H121M119 90.8H121M119 88.9H121M119 87.1H121" stroke="#7c7c7c" stroke-width="1" fill="none"/>
<g font-family='"Liberation Sans", sans-serif' font-size="5.8" fill="#444"><text x="115" y="470.7" text-anchor="end">10</text><text x="115" y="452.3" text-anchor="end">11</text><text x="115" y="433.8" text-anchor="end">12</text><text x="115" y="415.4" text-anchor="end">13</text><text x="115" y="397.0" text-anchor="end">14</text><text x="115" y="378.6" text-anchor="end">15</text><text x="115" y="360.1" text-anchor="end">16</text><text x="115" y="341.7" text-anchor="end">17</text><text x="115" y="323.3" text-anchor="end">18</text><text x="115" y="304.8" text-anchor="end">19</text><text x="115" y="286.4" text-anchor="end">20</text><text x="115" y="268.0" text-anchor="end">21</text><text x="115" y="249.5" text-anchor="end">22</text><text x="115" y="231.1" text-anchor="end">23</text><text x="115" y="212.7" text-anchor="end">24</text><text x="115" y="194.2" text-anchor="end">25</text><text x="115" y="175.8" text-anchor="end">26</text><text x="115" y="157.4" text-anchor="end">27</text><text x="115" y="139.0" text-anchor="end">28</text><text x="115" y="120.5" text-anchor="end">29</text><text x="115" y="102.1" text-anchor="end">30</text></g>
<path d="M121.0 483V488M131.2 483V486M141.3 483V486M151.5 483V486M161.6 483V486M171.8 483V488M181.9 483V486M192.1 483V486M202.2 483V486M212.4 483V486M222.6 483V488M232.7 483V486M242.9 483V486M253.0 483V486M263.2 483V486M273.3 483V488M283.5 483V486M293.7 483V486M303.8 483V486M314.0 483V486M324.1 483V488M334.3 483V486M344.4 483V486M354.6 483V486M364.7 483V486M374.9 483V488M385.1 483V486M395.2 483V486M405.4 483V486M415.5 483V486M425.7 483V488M435.8 483V486M446.0 483V486M456.1 483V486M466.3 483V486M476.5 483V488M486.6 483V486M496.8 483V486M506.9 483V486M517.1 483V486M527.2 483V488M537.4 483V486M547.6 483V486M557.7 483V486M567.9 483V486M578.0 483V488M588.2 483V486M598.3 483V486M608.5 483V486M618.6 483V486M628.8 483V488M639.0 483V486M649.1 483V486M659.3 483V486M669.4 483V486M679.6 483V488M689.7 483V486M699.9 483V486M710.0 483V486M720.2 483V486M730.4 483V488M740.5 483V486M750.7 483V486M760.8 483V486M771.0 483V486M781.1 483V488M791.3 483V486M801.5 483V486M811.6 483V486M821.8 483V486M831.9 483V488M842.1 483V486M852.2 483V486M862.4 483V486M872.5 483V486M882.7 483V488M892.9 483V486M903.0 483V486M913.2 483V486M923.3 483V486M933.5 483V488M943.6 483V486M953.8 483V486M963.9 483V486M974.1 483V486M984.3 483V488" stroke="#555" stroke-width="1" fill="none"/>
<g font-family='"Liberation Sans", sans-serif' font-size="5.8" fill="#444"><text x="121.0" y="492.8" text-anchor="middle">0</text><text x="171.8" y="492.8" text-anchor="middle">5</text><text x="222.6" y="492.8" text-anchor="middle">10</text><text x="273.3" y="492.8" text-anchor="middle">15</text><text x="324.1" y="492.8" text-anchor="middle">20</text><text x="374.9" y="492.8" text-anchor="middle">25</text><text x="425.7" y="492.8" text-anchor="middle">30</text><text x="476.5" y="492.8" text-anchor="middle">35</text><text x="527.2" y="492.8" text-anchor="middle">40</text><text x="578.0" y="492.8" text-anchor="middle">45</text><text x="628.8" y="492.8" text-anchor="middle">50</text><text x="679.6" y="492.8" text-anchor="middle">55</text><text x="730.4" y="492.8" text-anchor="middle">60</text><text x="781.1" y="492.8" text-anchor="middle">65</text><text x="831.9" y="492.8" text-anchor="middle">70</text><text x="882.7" y="492.8" text-anchor="middle">75</text><text x="933.5" y="492.8" text-anchor="middle">80</text><text x="984.3" y="492.8" text-anchor="middle">85</text></g>
<text x="555.5" y="500.2" text-anchor="middle" font-family='"Liberation Sans", sans-serif' font-size="5.6" textLength="21" lengthAdjust="spacingAndGlyphs" fill="#333">Distance</text>
<text transform="translate(107.4 283.7) rotate(-90)" text-anchor="middle" font-family='"Liberation Sans", sans-serif' font-size="5.4" textLength="23" lengthAdjust="spacingAndGlyphs" fill="#333">Elevation</text>
</svg>
</body></html>
